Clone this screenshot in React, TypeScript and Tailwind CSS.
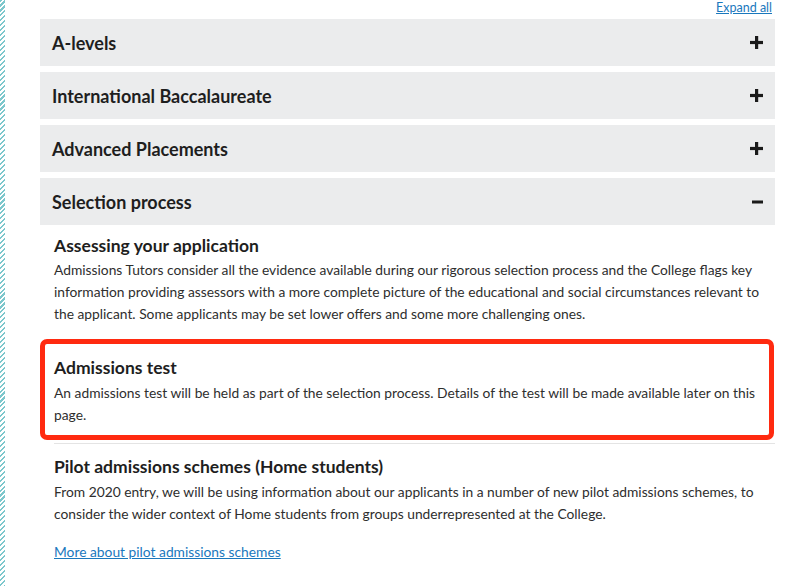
import React from "react";

function Plus() {
  return (
    <svg width="13" height="13" viewBox="0 0 13 13" className="block">
      <rect x="5" y="0" width="3.2" height="13" fill="#1a1a1a" />
      <rect x="0" y="4.9" width="13" height="3.2" fill="#1a1a1a" />
    </svg>
  );
}

function Minus() {
  return (
    <svg width="11" height="4" viewBox="0 0 11 4" className="block">
      <rect x="0" y="0.5" width="11" height="3" fill="#1a1a1a" />
    </svg>
  );
}

function Header({ title, open }: { title: string; open?: boolean }) {
  return (
    <div className="h-[47px] bg-[#ebeced] flex items-center justify-between pl-[12px] pr-[12px]">
      <span className="text-[18px] font-bold text-[#1e1e1e] leading-none">{title}</span>
      <span>{open ? <Minus /> : <Plus />}</span>
    </div>
  );
}

export default function App() {
  return (
    <div
      className="relative w-[800px] h-[586px] bg-white overflow-hidden text-[#333]"
      style={{ fontFamily: 'Lato, "Noto Sans", sans-serif' }}
    >
      <div className="absolute left-0 top-0 bottom-0 w-[5px] bg-[repeating-linear-gradient(135deg,#7cc7cc_0px,#7cc7cc_1.5px,#ffffff_1.5px,#ffffff_3.5px)]" />
      <div className="ml-[40px] w-[735px]">
        <div className="h-[19px] flex justify-end items-start pr-[3px]">
          <a className="text-[12.5px] leading-[16px] text-[#1a78bd] underline">Expand all</a>
        </div>
        <div className="flex flex-col gap-[6px]">
          <Header title="A-levels" />
          <Header title="International Baccalaureate" />
          <Header title="Advanced Placements" />
          <Header title="Selection process" open />
        </div>
        <div className="pt-[9px]">
          <div className="pl-[14px] pr-[10px]">
            <h3 className="text-[17.5px] font-bold text-[#1e1e1e] leading-[24px]">Assessing your application</h3>
            <p className="text-[13.8px] leading-[22px] text-[#2e2e2e] mt-[1px]">
              Admissions Tutors consider all the evidence available during our rigorous selection process and the College flags key information providing assessors with a more complete picture of the educational and social circumstances relevant to the applicant. Some applicants may be set lower offers and some more challenging ones.
            </p>
          </div>
          <div className="mt-[14px] w-[734px] border-[5px] border-[#ff2a10] rounded-[7px] pl-[9px] pr-[6px] pt-[12px] pb-[9px]">
            <h3 className="text-[17.5px] font-bold text-[#1e1e1e] leading-[24px]">Admissions test</h3>
            <p className="text-[13.8px] leading-[22px] text-[#2e2e2e] mt-[2px]">
              An admissions test will be held as part of the selection process. Details of the test will be made available later on this page.
            </p>
          </div>
          <div className="ml-[14px] mt-[3px] h-px bg-[#e4e4e4]" />
          <div className="pl-[14px] pr-[10px] pt-[11px]">
            <h3 className="text-[17.5px] font-bold text-[#1e1e1e] leading-[24px]">Pilot admissions schemes (Home students)</h3>
            <p className="text-[13.8px] leading-[22px] text-[#2e2e2e] mt-[2px]">
              From 2020 entry, we will be using information about our applicants in a number of new pilot admissions schemes, to consider the wider context of Home students from groups underrepresented at the College.
            </p>
            <a className="block mt-[16px] text-[13.8px] leading-[22px] text-[#1a78bd] underline">More about pilot admissions schemes</a>
          </div>
        </div>
      </div>
    </div>
  );
}
